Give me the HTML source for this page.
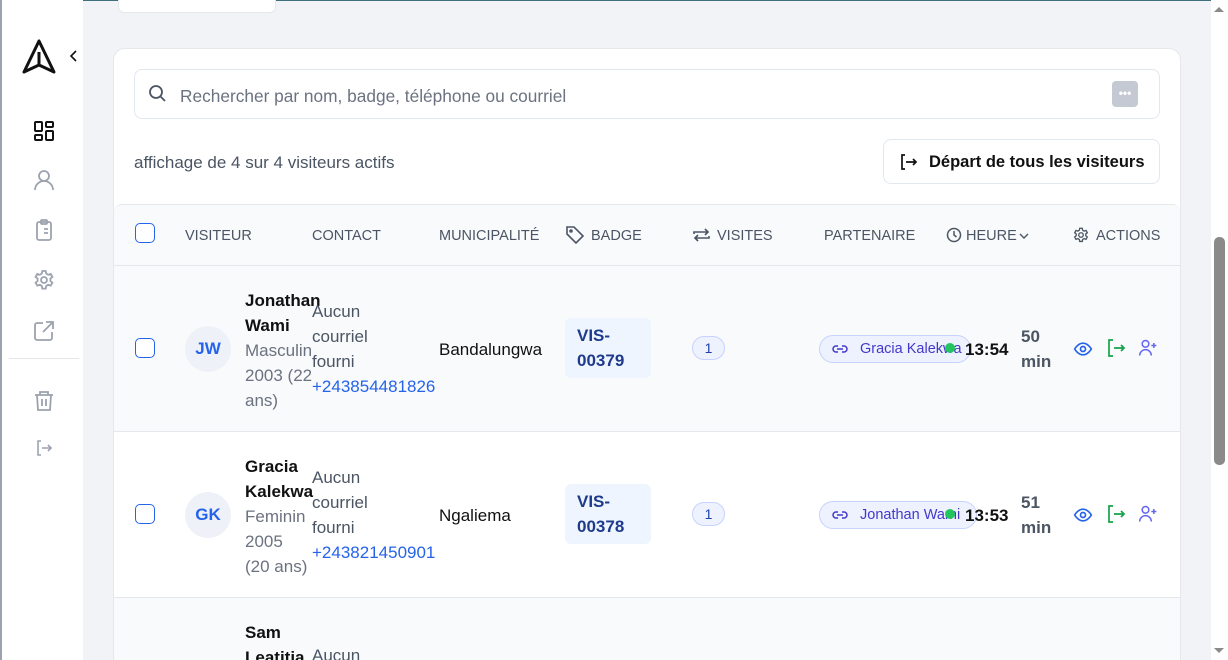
<!DOCTYPE html>
<html><head><meta charset="utf-8"><style>
*{box-sizing:border-box;margin:0;padding:0}
html,body{width:1228px;height:660px;overflow:hidden}
body{background:#f1f3f6;font-family:"Liberation Sans",Arial,sans-serif;position:relative;color:#111}
.wrap{position:absolute;left:0;top:0;width:1228px;height:660px;overflow:hidden}
.a{position:absolute}
.side{left:0;top:0;width:83px;height:660px;background:#fff;border-left:2px solid #9ca3af}
.ic{position:absolute;left:30px}
.card{left:113px;top:48px;width:1068px;height:640px;background:#fff;border:1px solid #e5e7eb;border-radius:12px}
.hd{font-size:14.5px;color:#4b5563;top:228px}
.row{left:114px;width:1066px;height:166px;border-top:1px solid #e5e7eb}
.t{font-size:17px;line-height:25px}
.cb{width:20px;height:20px;border:1.5px solid #2563eb;border-radius:5px;background:#fff}
.av{width:46px;height:46px;border-radius:50%;background:#eef2f8;color:#2563eb;font-weight:bold;font-size:17px;text-align:center;line-height:46px}
.badge{width:86px;height:60px;background:#eff5ff;border-radius:6px;color:#1e3a8a;font-weight:bold;font-size:17px;line-height:25px;padding:5px 12px}
.pill{height:24px;border:1px solid #c7d2fe;background:#eef2ff;border-radius:12px;color:#1e40af;font-size:14px;text-align:center;line-height:22px}
.pt{height:28px;border:1px solid #c7d2fe;background:#eef2ff;border-radius:14px;color:#4338ca;font-size:14.5px;line-height:26px;padding-left:40px;white-space:nowrap;overflow:visible}
</style></head><body><div class="wrap">
<div class="a" style="left:0;top:0;width:1228px;height:1px;background:#3f6f7a"></div>
<div class="a side">
<svg class="a" style="left:19px;top:38px" width="36" height="36" viewBox="0 0 36 36" fill="none" stroke="#111" stroke-width="3" stroke-linejoin="round"><path d="M18 3L3 34L18 27L33 34Z"/><path d="M18 14V27"/></svg>
<svg class="a" style="left:66px;top:50px" width="12" height="12" viewBox="0 0 12 12" fill="none" stroke="#111" stroke-width="1.6"><path d="M8 1L3 6L8 11"/></svg>
<svg class="ic" style="top:119px" width="24" height="24" viewBox="0 0 24 24" fill="none" stroke="#111" stroke-width="2"><rect x="3" y="3" width="7" height="9" rx="1"/><rect x="14" y="3" width="7" height="5" rx="1"/><rect x="14" y="12" width="7" height="9" rx="1"/><rect x="3" y="16" width="7" height="5" rx="1"/></svg>
<svg class="ic" style="top:168px" width="24" height="24" viewBox="0 0 24 24" fill="none" stroke="#9ca3af" stroke-width="1.8"><circle cx="12" cy="8" r="5"/><path d="M3 22a9 9 0 0 1 18 0"/></svg>
<svg class="ic" style="top:218px" width="24" height="24" viewBox="0 0 24 24" fill="none" stroke="#9ca3af" stroke-width="1.8"><rect x="5" y="4" width="14" height="18" rx="2"/><rect x="9" y="2" width="6" height="4" rx="1"/><path d="M9 11h.01M12 11h4M9 15h.01M12 15h4M9 19h.01"/></svg>
<svg class="ic" style="top:268px" width="24" height="24" viewBox="0 0 24 24" fill="none" stroke="#9ca3af" stroke-width="1.8"><circle cx="12" cy="12" r="3"/><path d="M10.3 3h3.4l.5 2.6 2 1.2 2.5-.9 1.7 3-2 1.7v2.4l2 1.7-1.7 3-2.5-.9-2 1.2-.5 2.6h-3.4l-.5-2.6-2-1.2-2.5.9-1.7-3 2-1.7v-2.4l-2-1.7 1.7-3 2.5.9 2-1.2z"/></svg>
<svg class="ic" style="top:319px" width="24" height="24" viewBox="0 0 24 24" fill="none" stroke="#9ca3af" stroke-width="1.8"><path d="M11 4H5a2 2 0 0 0-2 2v13a2 2 0 0 0 2 2h13a2 2 0 0 0 2-2v-6M14 3h7v7M21 3L11 13"/></svg>
<div class="a" style="left:7px;top:358px;width:70px;height:1px;background:#e5e7eb"></div>
<svg class="ic" style="top:389px" width="24" height="24" viewBox="0 0 24 24" fill="none" stroke="#9ca3af" stroke-width="1.8"><path d="M3 6h18M8 6V3h8v3M5 6l1 15h12l1-15M10 10v7M14 10v7"/></svg>
<svg class="ic" style="top:438px;left:32px" width="20" height="20" viewBox="0 0 20 20" fill="none" stroke="#9ca3af" stroke-width="1.6"><path d="M7 3H4v14h3M8 10h9M14 7l3 3-3 3"/></svg>
</div>
<div class="a" style="left:118px;top:-10px;width:158px;height:23px;background:#fff;border:1px solid #e5e7eb;border-radius:6px"></div>
<div class="a card"></div>
<div class="a" style="left:134px;top:69px;width:1026px;height:50px;border:1px solid #e2e8f0;border-radius:8px;background:#fff"></div>
<svg class="a" style="left:147px;top:83px" width="20" height="20" viewBox="0 0 20 20" fill="none" stroke="#4b5563" stroke-width="1.8"><circle cx="9" cy="9" r="6"/><path d="M13.5 13.5L18 18"/></svg>
<div class="a" style="left:180px;top:86px;font-size:17.3px;color:#6b7280">Rechercher par nom, badge, téléphone ou courriel</div>
<div class="a" style="left:1112px;top:81px;width:26px;height:26px;background:#c4c9d3;border-radius:4px;color:#fff;font-size:12px;text-align:center;line-height:24px;font-weight:bold">•••</div>
<div class="a" style="left:134px;top:153px;font-size:17px;color:#4b5563">affichage de 4 sur 4 visiteurs actifs</div>
<div class="a" style="left:883px;top:139px;width:277px;height:45px;border:1px solid #e2e8f0;border-radius:8px;background:#fff"></div>
<svg class="a" style="left:899px;top:152px" width="20" height="20" viewBox="0 0 20 20" fill="none" stroke="#111" stroke-width="1.7"><path d="M6 3H3v14h3M7 10h10M14 7l3 3-3 3"/></svg>
<div class="a" style="left:929px;top:153px;font-size:16.5px;font-weight:bold">Départ de tous les visiteurs</div>
<div class="a" style="left:114px;top:204px;width:1066px;height:62px;background:#f8fafc;border-top:1px solid #e5e7eb;border-radius:8px 8px 0 0"></div>
<div class="a cb" style="left:135px;top:223px"></div>
<div class="a hd" style="left:185px">VISITEUR</div>
<div class="a hd" style="left:312px">CONTACT</div>
<div class="a hd" style="left:439px">MUNICIPALITÉ</div>
<svg class="a" style="left:565px;top:225px" width="20" height="20" viewBox="0 0 20 20" fill="none" stroke="#4b5563" stroke-width="1.6"><path d="M2 2h7l9 9-7 7-9-9z"/><circle cx="6" cy="6" r="1"/></svg>
<div class="a hd" style="left:591px">BADGE</div>
<svg class="a" style="left:692px;top:226px" width="19" height="18" viewBox="0 0 19 18" fill="none" stroke="#4b5563" stroke-width="1.6"><path d="M2 8V6h14M13 3l3 3-3 3M17 10v2H3M6 15l-3-3 3-3"/></svg>
<div class="a hd" style="left:717px">VISITES</div>
<div class="a hd" style="left:824px">PARTENAIRE</div>
<svg class="a" style="left:946px;top:227px" width="16" height="16" viewBox="0 0 16 16" fill="none" stroke="#4b5563" stroke-width="1.5"><circle cx="8" cy="8" r="6.5"/><path d="M8 4v4l2.5 2"/></svg>
<div class="a hd" style="left:966px">HEURE</div>
<svg class="a" style="left:1019px;top:232px" width="10" height="8" viewBox="0 0 10 8" fill="none" stroke="#4b5563" stroke-width="1.4"><path d="M1 2l4 4 4-4"/></svg>
<svg class="a" style="left:1072px;top:226px" width="18" height="18" viewBox="0 0 24 24" fill="none" stroke="#4b5563" stroke-width="1.8"><circle cx="12" cy="12" r="3"/><path d="M10.3 3h3.4l.5 2.6 2 1.2 2.5-.9 1.7 3-2 1.7v2.4l2 1.7-1.7 3-2.5-.9-2 1.2-.5 2.6h-3.4l-.5-2.6-2-1.2-2.5.9-1.7-3 2-1.7v-2.4l-2-1.7 1.7-3 2.5.9 2-1.2z"/></svg>
<div class="a hd" style="left:1096px">ACTIONS</div>

<div class="a row" style="top:265px;background:#f8fafc"></div>
<div class="a row" style="top:431px;background:#fff"></div>
<div class="a row" style="top:597px;background:#f8fafc;height:70px"></div>

<div class="a cb" style="left:135px;top:338px"></div>
<div class="a av" style="left:185px;top:326px">JW</div>
<div class="a t" style="left:245px;top:288px;width:76px"><b>Jonathan Wami</b><br><span style="color:#6b7280">Masculin 2003 (22 ans)</span></div>
<div class="a t" style="left:312px;top:299px;color:#4b5563;width:70px">Aucun courriel fourni</div>
<div class="a t" style="left:312px;top:374px;color:#2563eb">+243854481826</div>
<div class="a t" style="left:439px;top:337px">Bandalungwa</div>
<div class="a badge" style="left:565px;top:318px">VIS-<br>00379</div>
<div class="a pill" style="left:692px;top:336px;width:33px">1</div>
<div class="a pt" style="left:819px;top:335px;width:152px">Gracia Kalekwa</div>
<svg class="a" style="left:832px;top:341px" width="16" height="16" viewBox="0 0 16 16" fill="none" stroke="#4338ca" stroke-width="1.5"><path d="M6 5H4a3 3 0 0 0 0 6h2M10 5h2a3 3 0 0 1 0 6h-2M5 8h6"/></svg>
<div class="a" style="left:945px;top:343px;width:10px;height:10px;border-radius:50%;background:#22c55e"></div>
<div class="a" style="left:965px;top:340px;font-size:17px;font-weight:bold">13:54</div>
<div class="a t" style="left:1021px;top:324px;color:#4b5563;font-weight:bold">50<br>min</div>
<svg class="a" style="left:1073px;top:339px" width="20" height="20" viewBox="0 0 24 24" fill="none" stroke="#2563eb" stroke-width="2"><path d="M2 12s4-7 10-7 10 7 10 7-4 7-10 7S2 12 2 12z"/><circle cx="12" cy="12" r="3"/></svg>
<svg class="a" style="left:1106px;top:338px" width="20" height="20" viewBox="0 0 20 20" fill="none" stroke="#16a34a" stroke-width="1.7"><path d="M7 2H3v16h4M8 10h10M15 7l3 3-3 3"/></svg>
<svg class="a" style="left:1138px;top:338px" width="20" height="20" viewBox="0 0 24 24" fill="none" stroke="#6366f1" stroke-width="1.8"><circle cx="9" cy="7" r="4"/><path d="M2 21a7 7 0 0 1 14 0M19 6v6M16 9h6"/></svg>

<div class="a cb" style="left:135px;top:504px"></div>
<div class="a av" style="left:185px;top:492px">GK</div>
<div class="a t" style="left:245px;top:454px;width:66px"><b>Gracia Kalekwa</b><br><span style="color:#6b7280">Feminin 2005 (20 ans)</span></div>
<div class="a t" style="left:312px;top:465px;color:#4b5563;width:70px">Aucun courriel fourni</div>
<div class="a t" style="left:312px;top:540px;color:#2563eb">+243821450901</div>
<div class="a t" style="left:439px;top:503px">Ngaliema</div>
<div class="a badge" style="left:565px;top:484px">VIS-<br>00378</div>
<div class="a pill" style="left:692px;top:502px;width:33px">1</div>
<div class="a pt" style="left:819px;top:501px;width:158px">Jonathan Wami</div>
<svg class="a" style="left:832px;top:507px" width="16" height="16" viewBox="0 0 16 16" fill="none" stroke="#4338ca" stroke-width="1.5"><path d="M6 5H4a3 3 0 0 0 0 6h2M10 5h2a3 3 0 0 1 0 6h-2M5 8h6"/></svg>
<div class="a" style="left:945px;top:509px;width:10px;height:10px;border-radius:50%;background:#22c55e"></div>
<div class="a" style="left:965px;top:506px;font-size:17px;font-weight:bold">13:53</div>
<div class="a t" style="left:1021px;top:490px;color:#4b5563;font-weight:bold">51<br>min</div>
<svg class="a" style="left:1073px;top:505px" width="20" height="20" viewBox="0 0 24 24" fill="none" stroke="#2563eb" stroke-width="2"><path d="M2 12s4-7 10-7 10 7 10 7-4 7-10 7S2 12 2 12z"/><circle cx="12" cy="12" r="3"/></svg>
<svg class="a" style="left:1106px;top:504px" width="20" height="20" viewBox="0 0 20 20" fill="none" stroke="#16a34a" stroke-width="1.7"><path d="M7 2H3v16h4M8 10h10M15 7l3 3-3 3"/></svg>
<svg class="a" style="left:1138px;top:504px" width="20" height="20" viewBox="0 0 24 24" fill="none" stroke="#6366f1" stroke-width="1.8"><circle cx="9" cy="7" r="4"/><path d="M2 21a7 7 0 0 1 14 0M19 6v6M16 9h6"/></svg>

<div class="a t" style="left:245px;top:620px;width:70px"><b>Sam Leatitia</b></div>
<div class="a t" style="left:312px;top:643px;color:#4b5563">Aucun</div>

<div class="a" style="left:1211px;top:0;width:17px;height:660px;background:#fff"></div>
<div class="a" style="left:1214px;top:237px;width:11px;height:228px;background:#8a8a8a;border-radius:5px"></div>
<div class="a" style="left:1214px;top:7px;width:0;height:0;border-left:5px solid transparent;border-right:5px solid transparent;border-bottom:5px solid #8a8a8a"></div>
<div class="a" style="left:1214px;top:648px;width:0;height:0;border-left:5px solid transparent;border-right:5px solid transparent;border-top:5px solid #8a8a8a"></div>
</div></body></html>
